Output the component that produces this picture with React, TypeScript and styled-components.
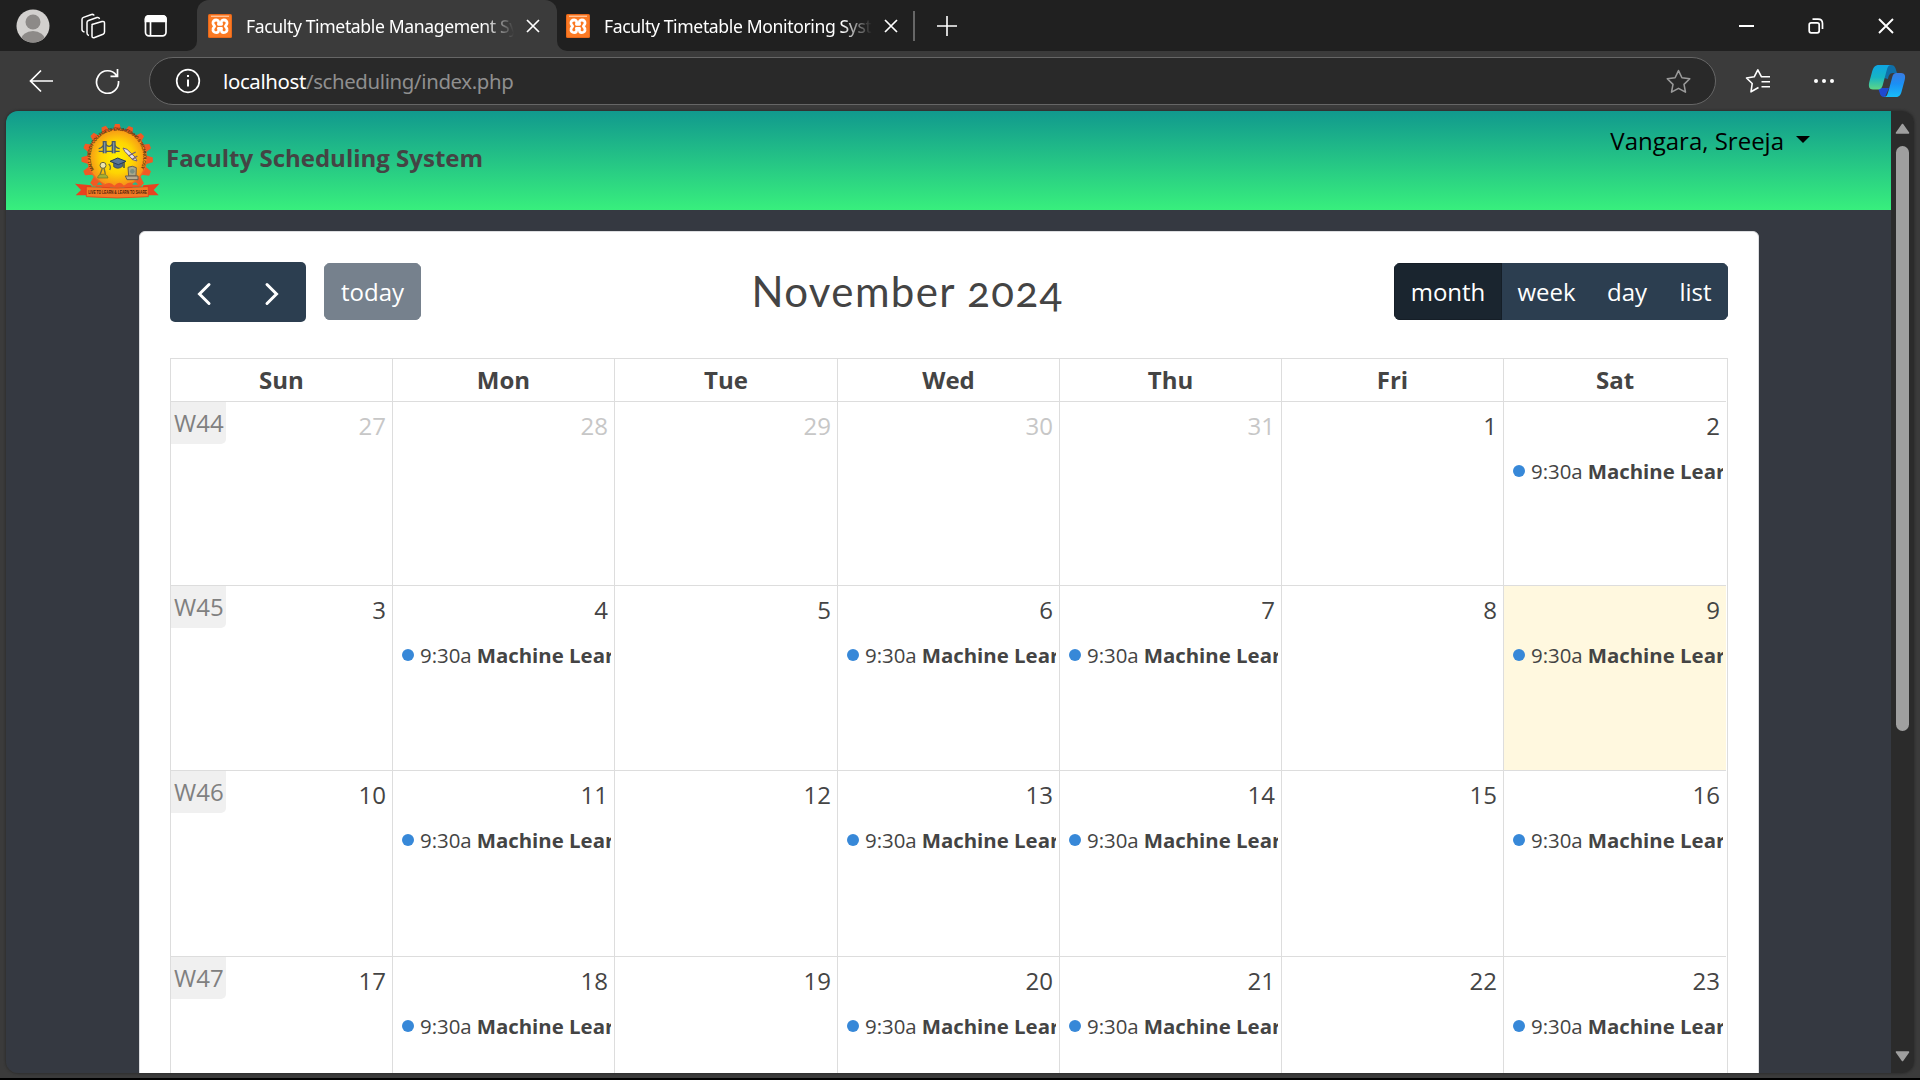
import React from "react";
import styled, { createGlobalStyle } from "styled-components";

const Global = createGlobalStyle`
  * { box-sizing: border-box; }
  html, body { margin: 0; padding: 0; background: #000; overflow: hidden; }
  body { font-family: "Open Sans", "Noto Sans", sans-serif; }
`;

const chromeFont = `"Noto Sans", "Open Sans", sans-serif`;

const Window = styled.div`
  width: 1920px;
  height: 1078px;
  display: flex;
  flex-direction: column;
  background: #3b3b3b;
  overflow: hidden;
  color: #fff;
`;

const TabStrip = styled.div`
  height: 51px;
  flex: none;
  display: flex;
  background: #202020;
`;

const StripTools = styled.div`
  width: 197px;
  display: flex;
  align-items: center;
  background: #3b3b3b;
`;

const StripToolsInner = styled.div`
  width: 197px;
  height: 51px;
  display: flex;
  align-items: center;
  padding-left: 16px;
  gap: 30px;
  background: #202020;
  border-bottom-right-radius: 10px;
`;

const Tab = styled.div<{ $active?: boolean }>`
  width: ${(p) => (p.$active ? 360 : 355)}px;
  height: 51px;
  display: flex;
  align-items: center;
  padding-left: ${(p) => (p.$active ? 11 : 9)}px;
  border-radius: 12px 12px 0 0;
  background: ${(p) => (p.$active ? "#3b3b3b" : "transparent")};
`;

const TabRest = styled.div`
  flex: 1;
  background: #3b3b3b;
  display: flex;
`;

const TabRestInner = styled.div`
  flex: 1;
  display: flex;
  align-items: center;
  background: #202020;
  border-bottom-left-radius: 10px;
`;

const TabTitle = styled.div`
  width: 268px;
  margin: 0 12px 0 14px;
  overflow: hidden;
  white-space: nowrap;
  font: 400 17.6px/28px ${chromeFont};
  letter-spacing: -0.38px;
  color: #fff;
  mask-image: linear-gradient(to right, #000 calc(100% - 30px), transparent);
`;

const Divider = styled.i`
  width: 2px;
  height: 30px;
  background: #666;
  margin: 0 21px 0 1px;
`;

const WindowControls = styled.div`
  margin-left: auto;
  display: flex;
  align-items: center;
  gap: 54px;
  padding-right: 26px;
`;

const Toolbar = styled.div`
  height: 60px;
  flex: none;
  display: flex;
  align-items: center;
  padding: 0 14px 0 29px;
`;

const AddressBar = styled.div`
  width: 1567px;
  flex: 1;
  height: 48px;
  margin: 0 29px 0 29px;
  padding: 0 24px 0 25px;
  border: 1.5px solid #666;
  border-radius: 24px;
  background: #292929;
  display: flex;
  align-items: center;
`;

const Url = styled.div`
  flex: 1;
  margin-left: 22px;
  font: 400 20.4px/30px ${chromeFont};
  letter-spacing: -0.36px;
  color: #8f8f8f;
  b { font-weight: 400; color: #fff; }
`;

const PageFrame = styled.div`
  width: 1908px;
  height: 962px;
  margin-left: 6px;
  display: flex;
  border-radius: 12px;
  overflow: hidden;
  box-shadow: 0 0 3px #222;
`;

const Page = styled.div`
  width: 1885px;
  background: #353941;
  color: #444;
`;

const Scrollbar = styled.div`
  width: 23px;
  background: #2b2b2b;
  display: flex;
  flex-direction: column;
  align-items: center;
  padding: 12px 0 11px;
`;

const Thumb = styled.div`
  width: 13px;
  height: 585px;
  margin-top: 12px;
  margin-bottom: auto;
  border-radius: 7px;
  background: #9f9f9f;
`;

const Header = styled.header`
  height: 99px;
  background: linear-gradient(#11998e, #38ef7d);
  display: flex;
  padding-left: 68px;
`;

const Brand = styled.div`
  display: flex;
  align-items: center;
  gap: 6px;
  font-size: 24px;
  line-height: 30px;
  font-weight: 700;
  span { padding-bottom: 5px; }
`;

const UserMenu = styled.div`
  margin: 11px 81px 0 auto;
  height: 36px;
  display: flex;
  align-items: center;
  gap: 12px;
  font-size: 24px;
  color: #000;
`;

const Caret = styled.i`
  width: 0;
  border: 7px solid transparent;
  border-top-color: #000;
  border-bottom: 0;
  margin-top: -1px;
`;

const Card = styled.main`
  width: 1620px;
  height: 862px;
  margin: 21px 0 0 133px;
  padding: 30px;
  background: #fff;
  border: 1px solid #dcdde0;
  border-radius: 6px;
`;

const CalendarBar = styled.div`
  height: 60px;
  display: flex;
  align-items: center;
  justify-content: space-between;
  margin-bottom: 36px;
`;

const Group = styled.div`
  display: flex;
  align-items: center;
`;

const ArrowPair = styled.div`
  width: 136px;
  height: 60px;
  margin-right: 18px;
  display: flex;
  align-items: center;
  padding: 4px 27px 0;
  justify-content: space-between;
  border-radius: 5px;
  background: #2c3e50;
`;

const Button = styled.div<{ $tone: "muted" | "dark" | "plain"; $width: number }>`
  width: ${(p) => p.$width}px;
  height: 57px;
  display: flex;
  align-items: center;
  justify-content: center;
  font-size: 24px;
  color: #fff;
  background: ${(p) => ({ muted: "#76818d", dark: "#1a252f", plain: "#2c3e50" })[p.$tone]};
  border: 1px solid ${(p) => ({ muted: "#76818d", dark: "#151e27", plain: "#2c3e50" })[p.$tone]};
`;

const Rounded = styled.div`
  display: flex;
  margin-bottom: 1px;
  border-radius: 6px;
  overflow: hidden;
`;

const MonthTitle = styled.h2`
  margin: 0;
  padding-bottom: 2px;
  font: 400 42px/52px Lato, sans-serif;
  font-feature-settings: "onum";
  letter-spacing: 1.4px;
  white-space: nowrap;
  color: #444;
`;

const Grid = styled.div`
  width: 1558px;
  border: 1px solid #ddd;
  border-bottom: 0;
  padding-right: 1px;
  overflow: hidden;
  height: 715px;
`;

const Row = styled.div<{ $height: number }>`
  height: ${(p) => p.$height}px;
  display: grid;
  grid-template-columns: 222px 222px 223px 222px 222px 222px 1fr;
  border-bottom: 1px solid #ddd;
`;

const HeadCell = styled.div`
  border-right: 1px solid #ddd;
  text-align: center;
  font-size: 24px;
  line-height: 42px;
  font-weight: 700;
  &:last-child { border-right: 0; }
`;

const DayCell = styled.div<{ $today?: boolean }>`
  min-width: 0;
  border-right: 1px solid #ddd;
  background: ${(p) => (p.$today ? "#fff8df" : "#fff")};
  &:last-child { border-right: 0; }
`;

const DayTop = styled.div`
  height: 48px;
  display: flex;
  align-items: flex-start;
`;

const Week = styled.span`
  width: 55px;
  height: 42px;
  padding-left: 3px;
  font-size: 24px;
  line-height: 42px;
  background: #f0f0f0;
  border-bottom-right-radius: 5px;
  color: #808080;
`;

const DayNumber = styled.span<{ $faded?: boolean }>`
  margin: 6px 6px 0 auto;
  font-size: 24px;
  line-height: 36px;
  color: ${(p) => (p.$faded ? "#c7c7c7" : "#444")};
`;

const Event = styled.div`
  margin: 4px 3px 0 9px;
  height: 34px;
  display: flex;
  align-items: center;
  overflow: hidden;
  white-space: nowrap;
  font-size: 20.4px;
  line-height: 34px;
  b { margin-left: 5px; font-weight: 700; flex: none; }
`;

const Dot = styled.i`
  width: 12px;
  height: 12px;
  flex: none;
  margin-right: 6px;
  border-radius: 50%;
  background: #3788d8;
`;

const Xampp = () => (
  <svg width="24" height="24" viewBox="0 0 24 24" style={{ flex: "none" }}>
    <rect width="24" height="24" rx="1.5" fill="#e8681a" />
    <rect x="1" y="1" width="22" height="22" rx="1" fill="#fb7a24" />
    <path d="M3 2.300h18" stroke="#ffc096" strokeWidth="1.400" />
    <path
      d="M10.400 10.300H13.600C12.600 7.200 14 6 15.800 6C18 6 19.300 7.600 19 9.400C18.800 10.800 17.600 11.300 17.400 12.300C17.600 13.300 18.800 13.800 19 15.200C19.300 17 18 18.600 15.800 18.600C14 18.600 12.600 17.400 13.600 14.300H10.400C11.400 17.400 10 18.600 8.200 18.600C6 18.600 4.700 17 5 15.200C5.200 13.800 6.400 13.300 6.600 12.300C6.400 11.300 5.200 10.800 5 9.400C4.700 7.600 6 6 8.200 6C10 6 11.400 7.200 10.400 10.300Z"
      fill="none" stroke="#fff" strokeWidth="2.800" strokeLinejoin="round"
    />
  </svg>
);

const Cross = ({ size, weight = 1.7 }: { size: number; weight?: number }) => (
  <svg width={size} height={size} viewBox={`0 0 ${size} ${size}`} style={{ flex: "none" }}>
    <path d={`M1 1L${size - 1} ${size - 1}M${size - 1} 1L1 ${size - 1}`} stroke="#fff" strokeWidth={weight} />
  </svg>
);

const starPath = "M12 1.5L15.3 8.4L22.8 9.4L17.3 14.7L18.7 22.2L12 18.6L5.3 22.2L6.7 14.7L1.2 9.4L8.7 8.4Z";

const teeth = Array.from({ length: 16 }, (_, i) => i * 22.5);

const Emblem = () => (
  <svg width="86" height="76" viewBox="43 37 258 228">
    <defs>
      <radialGradient id="sun" cx="50%" cy="48%" r="55%">
        <stop offset="0" stopColor="#fff200" />
        <stop offset=".5" stopColor="#fed403" />
        <stop offset="1" stopColor="#f5821f" />
      </radialGradient>
      <path id="arc" d="M103 178A79 79 0 1 1 244 170" />
    </defs>
    <g fill="#f15a24">
      {teeth.map((a) => (
        <path key={a} d="M159 62L166 40H180L186 62Z" transform={`rotate(${a} 172.500 147)`} />
      ))}
    </g>
    <ellipse cx="172.500" cy="143" rx="88" ry="87" fill="url(#sun)" stroke="#f26a21" strokeWidth="4" />
    <text fontSize="13.500" fontWeight="700" fill="#5c3310" fontFamily="Liberation Sans, sans-serif">
      <textPath href="#arc" textLength="325">MALLA REDDY COLLEGE OF ENGINEERING &amp; TECHNOLOGY</textPath>
    </text>
    <g stroke="#4b5b66" strokeWidth="4" fill="none">
      <path d="M117 122H180M117 114Q130 112 135 96Q148 118 162 96Q168 112 180 114" />
      <path d="M131 128V93H139V128M158 128V93H166V128" fill="#7e95a3" />
    </g>
    <path d="M190 112L202 116L227 140L232 151L219 147L195 122Z" fill="#e8e2e6" stroke="#76616f" strokeWidth="3" />
    <path d="M206 136L228 124M217 147L233 136" stroke="#76616f" strokeWidth="4" />
    <path d="M162 156V168Q175 178 189 167V154" fill="#4d6787" stroke="#273c57" strokeWidth="2" />
    <path d="M151 152L174 142L199 152L176 162Z" fill="#5b7797" stroke="#273c57" strokeWidth="3" />
    <path d="M193 154V172" stroke="#273c57" strokeWidth="4" />
    <circle cx="130" cy="164" r="9" fill="#ede6ac" stroke="#6a653d" strokeWidth="3" />
    <path d="M128 173L121 192M133 172L137 190M147 160Q156 168 150 178" stroke="#77733d" strokeWidth="4" fill="none" />
    <path d="M114 202Q115 190 128 191Q142 188 145 202Z" fill="#a3ad35" stroke="#6b7227" strokeWidth="2" />
    <path d="M205 170Q218 163 230 171L229 196H207Z" fill="#a9a98b" stroke="#675e51" strokeWidth="3" />
    <circle cx="218" cy="182" r="7" fill="#7b8f81" />
    <path d="M197 196H235V207H202Z" fill="#b7ab91" stroke="#675e51" strokeWidth="3" />
    <path d="M107 218Q118 205 132 224Q150 210 164 225Q180 208 193 225Q213 208 222 222L240 213V229H107Z" fill="#f15a24" />
    <path d="M112 222Q118 207 128 222M218 222Q228 207 235 222" fill="#27b98a" />
    <path d="M46 219L95 224V254L48 254L64 238ZM299 219L250 224V254L297 254L282 238Z" fill="#e8421f" />
    <path d="M80 228Q172 236 266 228V258Q172 266 80 258Z" fill="#f37a25" stroke="#d83a1b" strokeWidth="2" />
    <text x="86" y="251" fontSize="18" fontWeight="700" fill="#4d1c0b" fontFamily="Liberation Sans, sans-serif" textLength="176" lengthAdjust="spacingAndGlyphs">
      LIVE TO LEARN &amp; LEARN TO SHARE
    </text>
  </svg>
);

const Copilot = () => (
  <svg width="38" height="34" viewBox="0 0 38 34" style={{ flex: "none" }}>
    <defs>
      <linearGradient id="cpA" x1="0" y1="0" x2="0" y2="1">
        <stop offset="0" stopColor="#0ea5e3" />
        <stop offset=".5" stopColor="#16b5c4" />
        <stop offset="1" stopColor="#5fd685" />
      </linearGradient>
      <linearGradient id="cpB" x1="0" y1="0" x2="0" y2="1">
        <stop offset="0" stopColor="#3b7be0" />
        <stop offset=".45" stopColor="#1b8ff5" />
        <stop offset="1" stopColor="#18bdf8" />
      </linearGradient>
    </defs>
    <path d="M18 1H23C27 1 27.500 4 29 9H25C21.500 9 20.500 12 20 15L16 14Z" fill="#0f6fa8" />
    <path d="M10 24H21L17 33H16C12 33 12 29 10 24Z" fill="#1f49d1" />
    <path d="M11 1H23C20 1 19.500 4 18.500 7L15 20C14 24 13 25.500 9 25.500H5C1 25.500 .3 22.500 1.300 18L4 8C5.200 3.500 7 1 11 1Z" fill="url(#cpA)" />
    <path d="M28 33H16C19 33 19.500 30 20.500 27L24 14C25 10 26 9 29 9H33C37 9 37.700 12 36.700 16L34 26C33 30.500 31.500 33 28 33Z" fill="url(#cpB)" />
  </svg>
);

const Triangle = ({ down }: { down?: boolean }) => (
  <svg width="15" height="11" viewBox="0 0 15 11" style={{ flex: "none" }}>
    <path d={down ? "M1.500 1H13.500L7.500 9.500Z" : "M1.500 10H13.500L7.500 1.500Z"} fill="#9f9f9f" stroke="#9f9f9f" strokeWidth="1.600" strokeLinejoin="round" />
  </svg>
);

const dayNames = ["Sun", "Mon", "Tue", "Wed", "Thu", "Fri", "Sat"];
const weeks = [
  { label: "W44", height: 184, days: [27, 28, 29, 30, 31, 1, 2], events: [6] },
  { label: "W45", height: 185, days: [3, 4, 5, 6, 7, 8, 9], events: [1, 3, 4, 6] },
  { label: "W46", height: 186, days: [10, 11, 12, 13, 14, 15, 16], events: [1, 3, 4, 6] },
  { label: "W47", height: 186, days: [17, 18, 19, 20, 21, 22, 23], events: [1, 3, 4, 6] },
];

export default function App() {
  return (
    <>
      <Global />
      <Window>
        <TabStrip>
          <StripTools>
            <StripToolsInner>
              <svg width="34" height="34" viewBox="0 0 34 34">
                <defs><clipPath id="face"><circle cx="17" cy="17" r="16.500" /></clipPath></defs>
                <circle cx="17" cy="17" r="16.500" fill="#d2d0ce" />
                <g clipPath="url(#face)" fill="#8d8a88">
                  <circle cx="17" cy="13" r="7.500" />
                  <ellipse cx="17" cy="31.500" rx="12" ry="9.500" />
                </g>
              </svg>
              <svg width="26" height="26" viewBox="0 0 26 26" fill="none" stroke="#fff" strokeWidth="1.500" strokeLinejoin="round" style={{ marginRight: 8 }}>
                <path d="M12 11.500L22 8.500Q24.500 8 24.500 10V19Q24.500 20.500 23 21.200L14 24.700Q12 25.200 12 23V13Q12 12 13 11.200Z" />
                <path d="M9 22.500Q7 22 7 20V9.500Q7 8 8.500 7.500L17 4.500Q19 4 19.500 6" />
                <path d="M4.500 19Q2 18.500 2 16.500V6.500Q2 5 3.500 4.400L11.500 1.500Q13.500 1 14.200 2.500" />
              </svg>
              <svg width="24" height="24" viewBox="0 0 24 24" fill="none" stroke="#fff" strokeWidth="1.700">
                <rect x="1.500" y="1.800" width="20.500" height="20" rx="3.500" />
                <path d="M1.500 7.500V5Q1.500 1.800 5 1.800H18.500Q22 1.800 22 5V7.500Z" fill="#fff" />
                <path d="M6.500 7V21.500" />
              </svg>
            </StripToolsInner>
          </StripTools>
          <Tab $active>
            <Xampp />
            <TabTitle>Faculty Timetable Management System</TabTitle>
            <Cross size={14} />
          </Tab>
          <TabRest>
            <TabRestInner>
              <Tab>
                <Xampp />
                <TabTitle>Faculty Timetable Monitoring System</TabTitle>
                <Cross size={14} />
              </Tab>
              <Divider />
              <svg width="22" height="22" viewBox="0 0 22 22"><path d="M11 1V21M1 11H21" stroke="#fff" strokeWidth="1.600" /></svg>
              <WindowControls>
                <svg width="15" height="16" viewBox="0 0 15 16"><path d="M0 8H15" stroke="#fff" strokeWidth="2" /></svg>
                <svg width="16" height="16" viewBox="0 0 16 16" fill="none" stroke="#fff" strokeWidth="1.700">
                  <rect x="1.200" y="4.800" width="10" height="10" rx="2" />
                  <path d="M4.500 1.200H10Q14.500 1.200 14.500 5.500V11" />
                </svg>
                <Cross size={16} weight={1.9} />
              </WindowControls>
            </TabRestInner>
          </TabRest>
        </TabStrip>

        <Toolbar>
          <svg width="25" height="24" viewBox="0 0 25 24" fill="none" stroke="#fff" strokeWidth="1.700" style={{ marginRight: 41, flex: "none" }}>
            <path d="M24 12H1.500M12 1.500L1.500 12L12 22.500" />
          </svg>
          <svg width="25" height="26" viewBox="0 0 25 26" fill="none" stroke="#fff" strokeWidth="1.700" style={{ flex: "none" }}>
            <path d="M21.500 7.500A11 11.300 0 1 0 23.500 13M22.500 1V8.300H15.500" />
          </svg>
          <AddressBar>
            <svg width="26" height="26" viewBox="0 0 26 26" fill="none" stroke="#fff" strokeWidth="1.700">
              <circle cx="13" cy="13" r="11.300" />
              <path d="M13 11.500V18.500M13 7V9" strokeWidth="2" />
            </svg>
            <Url><b>localhost</b>/scheduling/index.php</Url>
            <svg width="25" height="25" viewBox="0 0 24 24" fill="none" stroke="#9a9a9a" strokeWidth="1.500" strokeLinejoin="round">
              <path d={starPath} />
            </svg>
          </AddressBar>
          <svg width="26" height="26" viewBox="0 0 26 26" fill="none" stroke="#fff" strokeWidth="1.600" strokeLinejoin="round" style={{ marginRight: 42, flex: "none" }}>
            <path d="M13.500 19.500L6 23.800L7.200 15.500L1.500 10L9.200 8.800L12.800 1.800L16.500 8.800H25M16.500 13.800H25M16.500 18.800H25" />
          </svg>
          <svg width="22" height="6" viewBox="0 0 22 6" fill="#fff" style={{ marginRight: 33, flex: "none" }}>
            <circle cx="3" cy="3" r="2" /><circle cx="11" cy="3" r="2" /><circle cx="19" cy="3" r="2" />
          </svg>
          <Copilot />
        </Toolbar>

        <PageFrame>
          <Page>
            <Header>
              <Brand><Emblem /><span>Faculty Scheduling System</span></Brand>
              <UserMenu>Vangara, Sreeja<Caret /></UserMenu>
            </Header>
            <Card>
              <CalendarBar>
                <Group>
                  <ArrowPair>
                    <svg width="15" height="24" viewBox="0 0 15 24" fill="none" stroke="#fff" strokeWidth="3" strokeLinecap="round"><path d="M12 2.500L2.500 12L12 21.500" /></svg>
                    <svg width="15" height="24" viewBox="0 0 15 24" fill="none" stroke="#fff" strokeWidth="3" strokeLinecap="round"><path d="M3 2.500L12.500 12L3 21.500" /></svg>
                  </ArrowPair>
                  <Rounded><Button $tone="muted" $width={97}>today</Button></Rounded>
                </Group>
                <MonthTitle>November 2024</MonthTitle>
                <Rounded>
                  <Button $tone="dark" $width={108}>month</Button>
                  <Button $tone="plain" $width={89}>week</Button>
                  <Button $tone="plain" $width={72}>day</Button>
                  <Button $tone="plain" $width={65}>list</Button>
                </Rounded>
              </CalendarBar>
              <Grid>
                <Row $height={43}>
                  {dayNames.map((d) => <HeadCell key={d}>{d}</HeadCell>)}
                </Row>
                {weeks.map((w, wi) => (
                  <Row key={w.label} $height={w.height}>
                    {w.days.map((d, i) => (
                      <DayCell key={d} $today={d === 9}>
                        <DayTop>
                          {i === 0 && <Week>{w.label}</Week>}
                          <DayNumber $faded={wi === 0 && d > 20}>{d}</DayNumber>
                        </DayTop>
                        {w.events.includes(i) && (
                          <Event><Dot />9:30a<b>Machine Learning</b></Event>
                        )}
                      </DayCell>
                    ))}
                  </Row>
                ))}
              </Grid>
            </Card>
          </Page>
          <Scrollbar>
            <Triangle />
            <Thumb />
            <Triangle down />
          </Scrollbar>
        </PageFrame>
      </Window>
    </>
  );
}
